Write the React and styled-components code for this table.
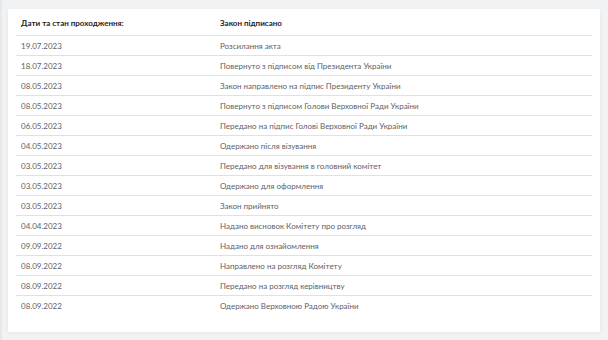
import React from 'react';
import styled, { createGlobalStyle } from 'styled-components';

const GlobalStyle = createGlobalStyle`
  html, body {
    margin: 0;
    padding: 0;
    background: #f1f2f3;
  }
  body {
    font-family: Lato, 'Open Sans', 'Noto Sans', sans-serif;
  }
`;

const Page = styled.div`
  padding: 9px 8px 8px 6px;
  border-left: 2px solid #e6e8ea;
  min-height: 340px;
  box-sizing: border-box;
`;

const Card = styled.div`
  background: #fff;
  padding: 0 8px 16px;
  box-shadow: 0 1px 4px rgba(0, 0, 0, 0.06);
`;

const Row = styled.div`
  display: grid;
  grid-template-columns: 199px 1fr;
  align-items: center;
  height: ${props => (props.head ? '27px' : '20px')};
  border-bottom: 1px solid #dde2e6;
  box-sizing: border-box;
  font-size: 8px;
  color: ${props => (props.head ? '#1f2125' : '#5e6168')};
  font-weight: ${props => (props.head ? 700 : 400)};
  padding-top: ${props => (props.head ? '1px' : '0')};

  &:last-child {
    border-bottom: none;
  }
`;

const Cell = styled.span`
  padding-left: 5px;
  white-space: nowrap;
`;

const rows = [
  ['19.07.2023', 'Розсилання акта'],
  ['18.07.2023', 'Повернуто з підписом від Президента України'],
  ['08.05.2023', 'Закон направлено на підпис Президенту України'],
  ['08.05.2023', 'Повернуто з підписом Голови Верховної Ради України'],
  ['06.05.2023', 'Передано на підпис Голові Верховної Ради України'],
  ['04.05.2023', 'Одержано після візування'],
  ['03.05.2023', 'Передано для візування в головний комітет'],
  ['03.05.2023', 'Одержано для оформлення'],
  ['03.05.2023', 'Закон прийнято'],
  ['04.04.2023', 'Надано висновок Комітету про розгляд'],
  ['09.09.2022', 'Надано для ознайомлення'],
  ['08.09.2022', 'Направлено на розгляд Комітету'],
  ['08.09.2022', 'Передано на розгляд керівництву'],
  ['08.09.2022', 'Одержано Верховною Радою України'],
];

export default function App() {
  return (
    <Page>
      <GlobalStyle />
      <Card>
        <Row head>
          <Cell>Дати та стан проходження:</Cell>
          <Cell>Закон підписано</Cell>
        </Row>
        {rows.map(([date, status], i) => (
          <Row key={i}>
            <Cell>{date}</Cell>
            <Cell>{status}</Cell>
          </Row>
        ))}
      </Card>
    </Page>
  );
}
